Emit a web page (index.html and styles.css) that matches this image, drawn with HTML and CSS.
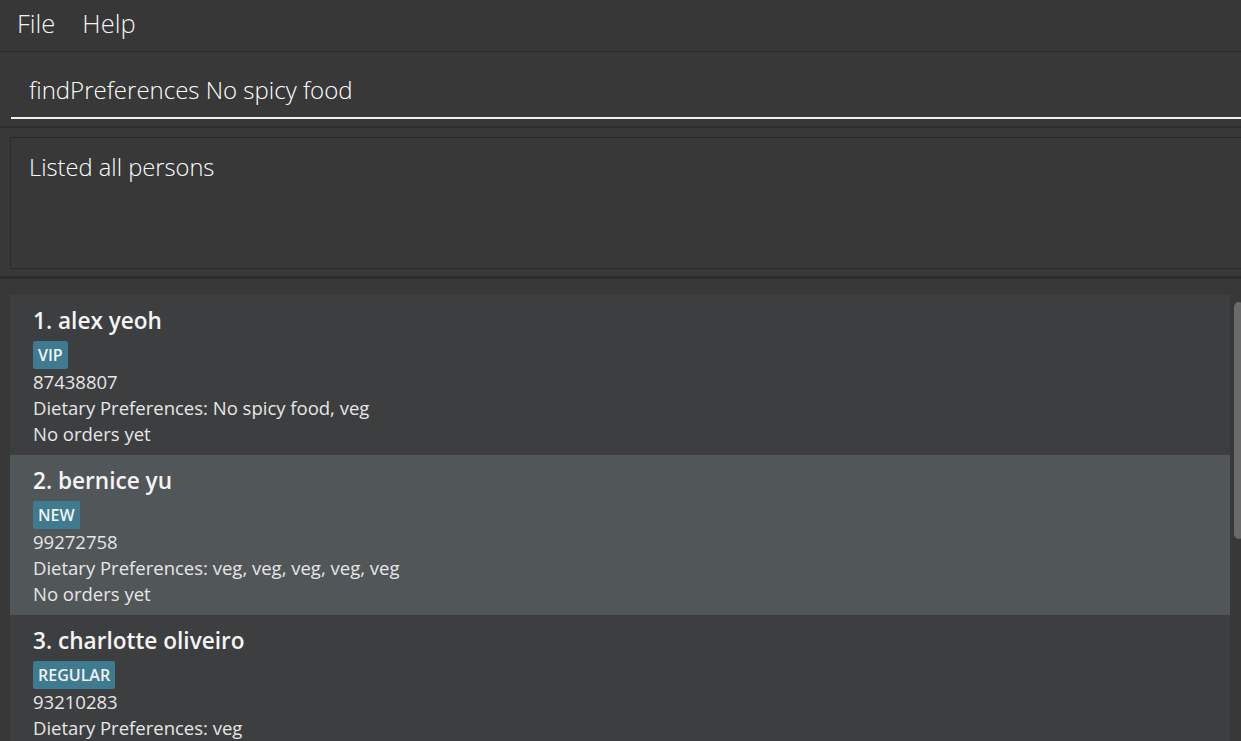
FILE: index.html
```html
<!DOCTYPE html>
<html lang="en">
<head>
<meta charset="utf-8">
<title>Address Book</title>
<link rel="stylesheet" href="styles.css">
</head>
<body>
<div class="app">
  <nav class="menubar">
    <span class="menu-item">File</span>
    <span class="menu-item">Help</span>
  </nav>
  <section class="command-pane">
    <div class="command-box">findPreferences No spicy food</div>
  </section>
  <section class="result-pane">
    <div class="result-box">Listed all persons</div>
  </section>
  <section class="list-pane">
    <div class="cards">
      <article class="card">
        <div class="name">1. alex yeoh</div>
        <div class="tags"><span class="tag">VIP</span></div>
        <div class="line">87438807</div>
        <div class="line">Dietary Preferences: No spicy food, veg</div>
        <div class="line">No orders yet</div>
      </article>
      <article class="card selected">
        <div class="name">2. bernice yu</div>
        <div class="tags"><span class="tag">NEW</span></div>
        <div class="line">99272758</div>
        <div class="line">Dietary Preferences: veg, veg, veg, veg, veg</div>
        <div class="line">No orders yet</div>
      </article>
      <article class="card">
        <div class="name">3. charlotte oliveiro</div>
        <div class="tags"><span class="tag">REGULAR</span></div>
        <div class="line">93210283</div>
        <div class="line">Dietary Preferences: veg</div>
        <div class="line">No orders yet</div>
      </article>
    </div>
    <div class="scrolltrack"><div class="thumb"></div></div>
  </section>
</div>
</body>
</html>
```
FILE: styles.css
```css
html, body {
  margin: 0;
  padding: 0;
  height: 100%;
  overflow: hidden;
  background: #383838;
  font-family: "Open Sans", "Liberation Sans", sans-serif;
  color: #ffffff;
}

.app {
  display: flex;
  flex-direction: column;
  height: 741px;
}

.menubar {
  height: 51px;
  display: flex;
  align-items: center;
  gap: 27px;
  padding-left: 17px;
  background: #373737;
  border-bottom: 1px solid #2b2b2b;
  box-sizing: content-box;
}

.menu-item {
  font-size: 25.5px;
  font-weight: 300;
  color: #f2f2f2;
  line-height: 1;
  margin-top: -4px;
}

.command-pane {
  height: 74px;
  padding-left: 11px;
  background: #383838;
  border-bottom: 2px solid #2c2c2c;
}

.command-box {
  height: 67px;
  box-sizing: border-box;
  border-bottom: 2px solid #f0f0f0;
  padding-left: 18px;
  font-size: 24px;
  font-weight: 300;
  line-height: 76px;
  color: #ffffff;
  white-space: nowrap;
}

.result-pane {
  height: 151px;
  padding: 9px 0 0 10px;
  box-sizing: border-box;
  background: #383838;
  border-bottom: 3px solid #2c2c2c;
}

.result-box {
  height: 132px;
  box-sizing: border-box;
  border: 1px solid #2a2a2a;
  border-right: none;
  padding: 12px 0 0 18px;
  font-size: 23.7px;
  font-weight: 300;
  line-height: 34px;
  color: #ffffff;
  background: #383838;
}

.list-pane {
  flex: 1;
  display: flex;
  padding-top: 16px;
  background: #383838;
  overflow: hidden;
}

.cards {
  margin-left: 10px;
  width: 1220px;
  display: flex;
  flex-direction: column;
}

.card {
  background: #3c3e3f;
  padding: 8px 0 8px 23px;
  display: flex;
  flex-direction: column;
}

.card.selected {
  background: #515658;
}

.name {
  font-size: 22.6px;
  font-weight: 600;
  line-height: 36px;
  color: #f4f4f4;
}

.tags {
  display: flex;
  margin-top: 2px;
}

.tag {
  background: #3e7b91;
  color: #f2f2f2;
  font-size: 16px;
  font-weight: 600;
  height: 28px;
  line-height: 28px;
  padding: 0 5px;
  border-radius: 2px;
}

.line {
  font-size: 18.5px;
  line-height: 26px;
  color: #e6e6e6;
  white-space: nowrap;
}

.scrolltrack {
  width: 11px;
  padding-top: 7px;
  background: #383838;
}

.thumb {
  margin-left: 4px;
  width: 10px;
  height: 237px;
  background: #6a6a6a;
  border-radius: 5px;
}
```
